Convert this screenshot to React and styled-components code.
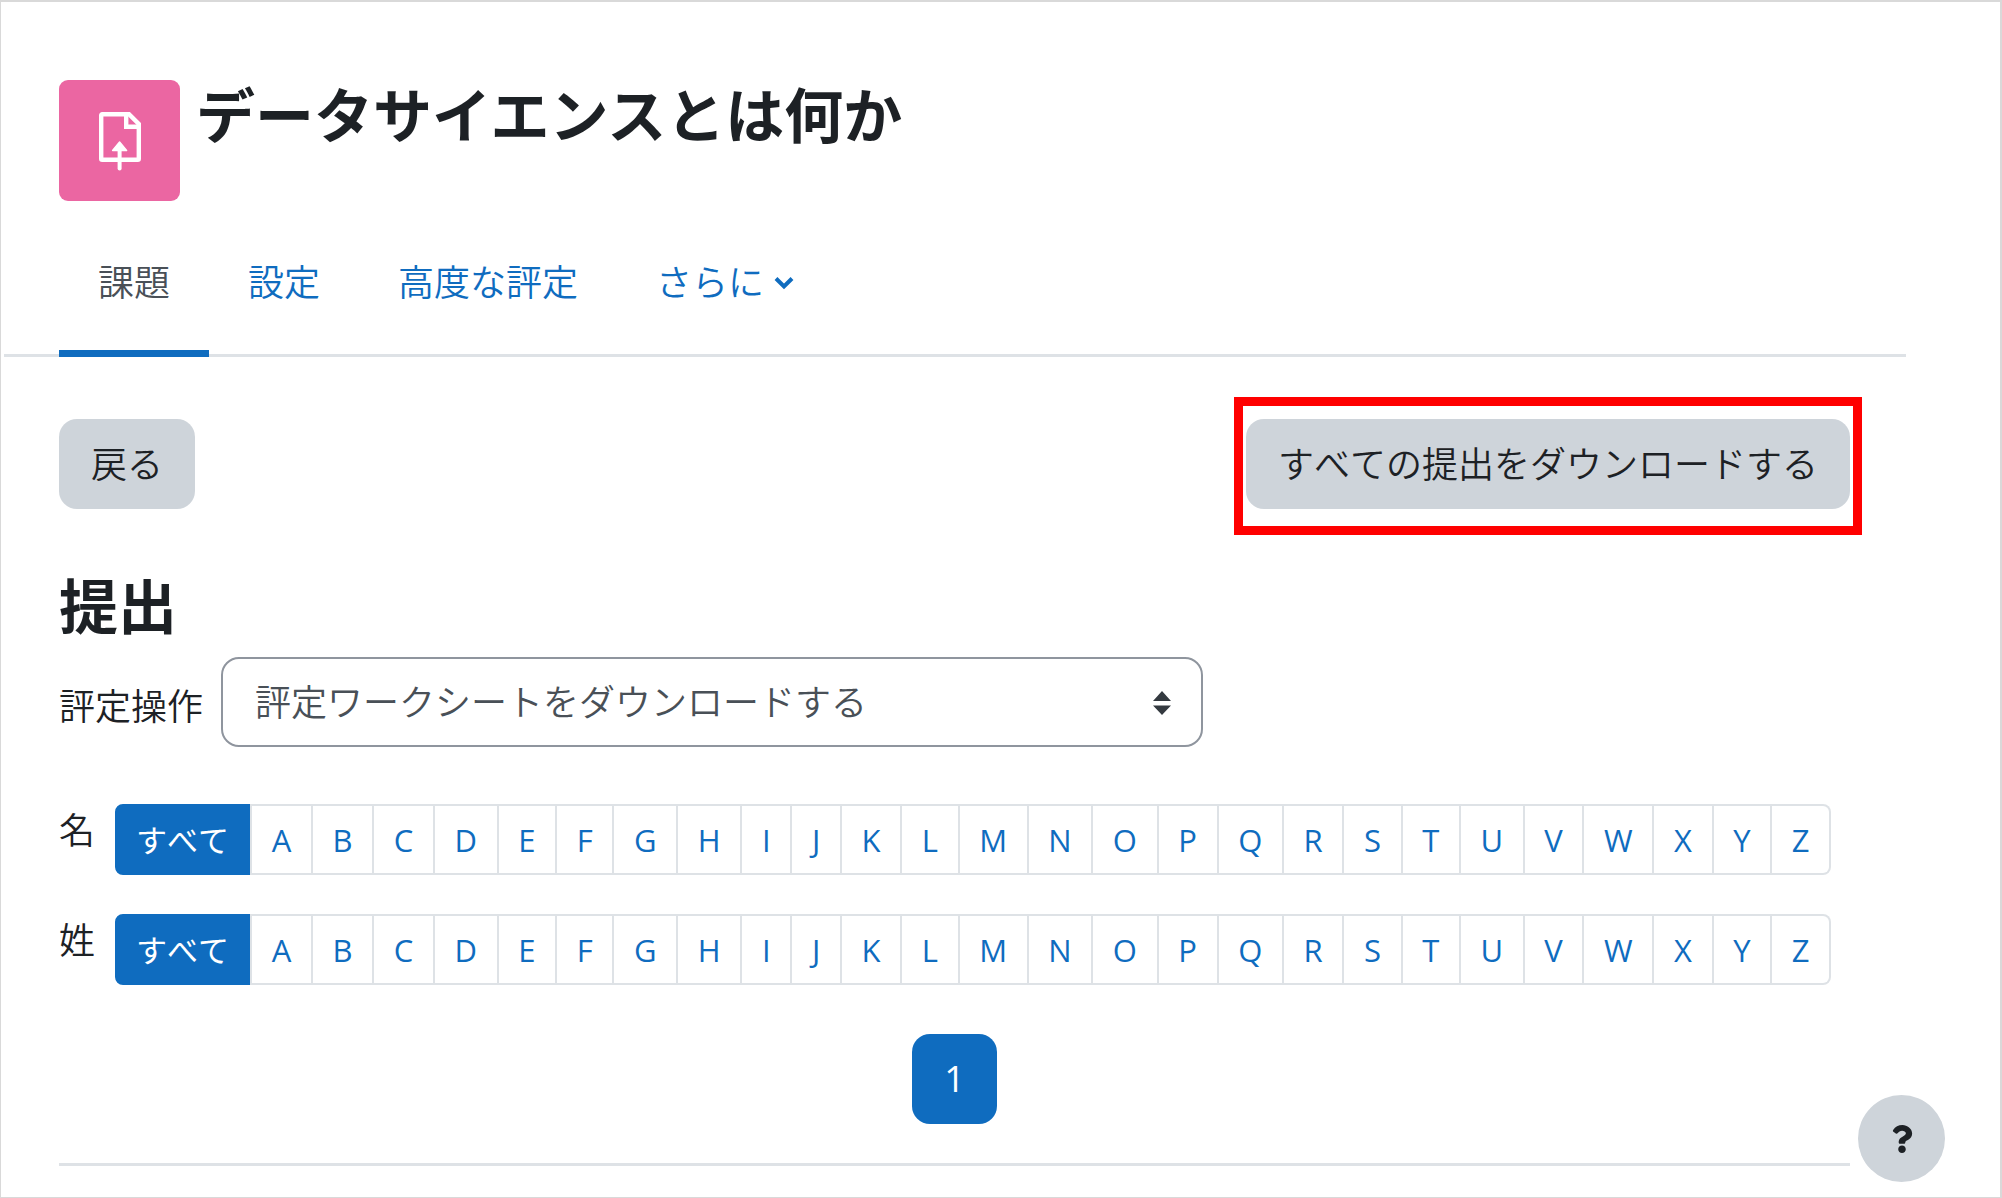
import React, {Component} from "react";
import styled, { createGlobalStyle, css } from "styled-components";
import { FaQuestion } from "react-icons/fa";

const blue = "#0f6cbf";
const line = "#dee2e6";
const ink = "#1d2125";
const grey = "#ced4da";

const GlobalStyle = createGlobalStyle`
    * {
        box-sizing: border-box;
    }
    body {
        margin: 0;
        background: #fff;
        color: ${ink};
        font: 350 36px/54px "Open Sans", "Noto Sans CJK JP", sans-serif;
        font-kerning: none;
    }
    button, select {
        color: inherit;
        font: inherit;
        font-kerning: inherit;
    }
    a {
        color: ${blue};
        text-decoration: none;
    }
`;

const Page = styled.div`
    min-height: 100vh;
    padding: 78px 150px 31px 58px;
    border: solid #d9d9d9;
    border-width: 2px 2px 1px 1px;
`;

const Header = styled.header`
    display: flex;
    align-items: flex-start;
    gap: 16px;
`;

const ActivityIcon = styled.div`
    display: flex;
    justify-content: center;
    align-items: center;
    width: 121px;
    height: 121px;
    border-radius: 9px;
    background: #eb66a2;
`;

const heading = css`
    margin: 0;
    font-size: 59px;
    font-weight: 700;
    font-kerning: normal;
    line-height: 70px;
`;

const Title = styled.h1`
    ${heading};
`;

const SectionTitle = styled.h2`
    ${heading};
    margin-top: 62px;
`;

const Tabs = styled.nav`
    display: flex;
    margin: 13px -56px 0 -55px;
    padding-left: 55px;
    border-bottom: 3px solid ${line};
`;

const Tab = styled.a`
    display: flex;
    align-items: center;
    gap: 10px;
    margin-bottom: -3px;
    padding: 42px 39px 40px;
    border-bottom: 7px solid transparent;
    ${props => props.$active && css`
        border-color: ${blue};
        color: #495057;
    `}
`;

const Actions = styled.div`
    display: flex;
    justify-content: space-between;
    margin-top: 62px;
`;

const Button = styled.button`
    display: block;
    padding: 19px 32px 17px;
    border: 0;
    border-radius: 18px;
    background: ${grey};
`;

const Highlight = styled.div`
    position: relative;
    &::after {
        content: "";
        position: absolute;
        inset: -22px -12px -26px;
        border: 9px solid #f00;
        pointer-events: none;
    }
`;

const Operation = styled.div`
    display: flex;
    align-items: center;
    gap: 18px;
    margin-top: 16px;
    label {
        padding-top: 10px;
    }
`;

const SelectBox = styled.div`
    position: relative;
    flex: 0 1 982px;
    svg {
        position: absolute;
        top: 34px;
        right: 32px;
        pointer-events: none;
    }
`;

const Select = styled.select`
    display: block;
    appearance: none;
    width: 100%;
    height: 90px;
    padding: 2px 64px 0 32px;
    border: 2px solid #8f959e;
    border-radius: 18px;
    background: #fff;
    color: #495057;
`;

const Filters = styled.div`
    display: grid;
    gap: 39px;
    margin-top: 57px;
`;

const Initials = styled.div`
    display: flex;
    gap: 20px;
`;

const Letters = styled.div`
    display: flex;
    flex: 0 1 1716px;
`;

const Letter = styled.a`
    flex: 1 0 auto;
    padding: 19px 19px 17px;
    border: solid ${line};
    border-width: 2px 2px 2px 0;
    font-size: 31px;
    font-weight: 400;
    line-height: 31px;
    text-align: center;
    &:first-child {
        flex-grow: 0;
        border-color: ${blue};
        border-left-width: 2px;
        border-radius: 8px 0 0 8px;
        background: ${blue};
        color: #fff;
    }
    &:nth-child(2) {
        border-left-width: 2px;
    }
    &:last-child {
        border-radius: 0 8px 8px 0;
    }
`;

const Pager = styled.nav`
    display: flex;
    justify-content: center;
    margin-top: 49px;
    padding-bottom: 39px;
    border-bottom: 3px solid ${line};
`;

const PageLink = styled.a`
    padding: 18px 32px;
    border-radius: 18px;
    background: ${blue};
    color: #fff;
    font-weight: 400;
`;

const HelpButton = styled.button`
    position: fixed;
    right: 57px;
    bottom: 16px;
    display: flex;
    justify-content: center;
    align-items: center;
    width: 87px;
    height: 87px;
    padding: 0;
    border: 0;
    border-radius: 50%;
    background: ${grey};
`;

const UploadIcon = () => (
  <svg width="42" height="60" viewBox="0 0 42 60" fill="none" stroke="#fff" strokeWidth="4.4">
    <path d="M2.2 4.200a1 1 0 0 1 1-1H30L39.8 13v34.800a1 1 0 0 1-1 1H3.200a1 1 0 0 1-1-1z" />
    <path d="M27.200 2v13.800H41" />
    <path d="M20.600 57.500V36" strokeLinecap="round" strokeWidth="4" />
    <path d="M20.600 31l7 8.500H13.600z" fill="#fff" strokeWidth="1.500" strokeLinejoin="round" />
  </svg>
);

const ChevronIcon = () => (
  <svg width="20" height="14" viewBox="0 0 20 14" fill="none" stroke="currentColor" strokeWidth="4">
    <path d="M2 2.500l8 8 8-8" />
  </svg>
);

const SortIcon = () => (
  <svg width="18" height="24" viewBox="0 0 18 24" fill="#343a40">
    <path d="M0 10L9 0l9 10zM0 14.500h18L9 24z" />
  </svg>
);

const InitialsBar = ({ label }) => (
  <Initials>
    <span>{label}</span>
    <Letters role="group" aria-label={label}>
      <Letter href="#">すべて</Letter>
      {"ABCDEFGHIJKLMNOPQRSTUVWXYZ".split("").map(letter => (
        <Letter href="#" key={letter}>{letter}</Letter>
      ))}
    </Letters>
  </Initials>
);

class App extends Component {
  render() {
    return(
      <Page lang="ja">
        <GlobalStyle />
        <Header>
          <ActivityIcon><UploadIcon /></ActivityIcon>
          <Title>データサイエンスとは何か</Title>
        </Header>
        <Tabs>
          <Tab href="#" $active>課題</Tab>
          <Tab href="#">設定</Tab>
          <Tab href="#">高度な評定</Tab>
          <Tab href="#">さらに<ChevronIcon /></Tab>
        </Tabs>
        <main>
          <Actions>
            <Button type="button">戻る</Button>
            <Highlight>
              <Button type="button">すべての提出をダウンロードする</Button>
            </Highlight>
          </Actions>
          <SectionTitle>提出</SectionTitle>
          <Operation>
            <label htmlFor="operation">評定操作</label>
            <SelectBox>
              <Select id="operation">
                <option>評定ワークシートをダウンロードする</option>
              </Select>
              <SortIcon />
            </SelectBox>
          </Operation>
          <Filters>
            <InitialsBar label="名" />
            <InitialsBar label="姓" />
          </Filters>
          <Pager>
            <PageLink href="#">1</PageLink>
          </Pager>
        </main>
        <HelpButton type="button" aria-label="ヘルプ">
          <FaQuestion size={28} />
        </HelpButton>
      </Page>
    );
  };
}

export default App;
